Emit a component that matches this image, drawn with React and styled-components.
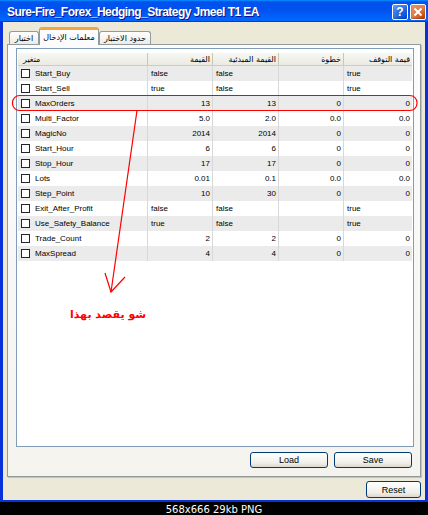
import React from "react";
import styled, { createGlobalStyle } from "styled-components";

const Global = createGlobalStyle`
  html, body { margin: 0; padding: 0; background: #000; }
  body { width: 428px; height: 515px; overflow: hidden; font-family: "Liberation Sans", "DejaVu Sans", sans-serif; }
  * { box-sizing: border-box; }
`;

const Page = styled.div`
  position: relative;
  width: 428px;
  height: 515px;
  display: flex;
  flex-direction: column;
  background: #000;
`;

const Window = styled.div`
  height: 502px;
  display: flex;
  flex-direction: column;
`;

const TitleBar = styled.div`
  height: 22px;
  flex: none;
  display: flex;
  align-items: center;
  padding: 1px 2px 0 7px;
  background: linear-gradient(180deg, #0997ff, #0053ee 8%, #0050ee 40%, #0066ff 88%, #0066ff 93%, #005bff 95%, #003dd7 96%, #003dd7);
`;

const Title = styled.span`
  flex: 1;
  color: #fff;
  font: bold 12px "Liberation Sans", sans-serif;
  letter-spacing: -0.55px;
  text-shadow: 1px 1px #0f1089;
  white-space: nowrap;
`;

const CaptionButtons = styled.div`
  display: flex;
  gap: 2px;
`;

const CaptionButton = styled.div`
  width: 16px;
  height: 16px;
  border: 1px solid #fff;
  border-radius: 2px;
  display: flex;
  align-items: center;
  justify-content: center;
  color: #fff;
  font: bold 12px "Liberation Sans", sans-serif;
  background: ${(p) =>
    p.$close
      ? "radial-gradient(circle at 85% 85%, #cc4600 0%, #dc6527 30%, #e38353 60%, #e69474 100%)"
      : "radial-gradient(circle at 85% 85%, #0054e9 0%, #2263d5 40%, #4480f0 70%, #7aa6f5 100%)"};
  box-shadow: inset 0 -1px 2px rgba(0,0,0,0.3);
`;

const Body = styled.div`
  flex: 1;
  display: flex;
  flex-direction: column;
  background: #ece9d8;
  border: solid #0831d9;
  border-width: 0 3px 2px 3px;
  padding: 5px 4px 2px 4px;
`;

const TabStrip = styled.div`
  height: 18px;
  margin-bottom: -1px;
  display: flex;
  align-items: flex-end;
  padding-left: 2px;
  position: relative;
  z-index: 1;
`;

const Tab = styled.div`
  width: ${(p) => p.$w}px;
  height: ${(p) => (p.$active ? 18 : 13)}px;
  margin-bottom: ${(p) => (p.$active ? 0 : 1)}px;
  display: flex;
  align-items: center;
  justify-content: center;
  font: 8px "DejaVu Sans", sans-serif;
  color: #000;
  white-space: nowrap;
  border: 1px solid #919b9c;
  border-bottom: none;
  border-radius: 3px 3px 0 0;
  background: ${(p) => (p.$active ? "#fcfcfe" : "linear-gradient(#ffffff, #ecebe6)")};
  border-top: ${(p) => (p.$active ? "3px solid #f1a640" : "1px solid #919b9c")};
  padding-bottom: ${(p) => (p.$active ? 1 : 0)}px;
`;

const Panel = styled.div`
  height: 433px;
  flex: none;
  display: flex;
  flex-direction: column;
  border: 1px solid #919b9c;
  box-shadow: 1px 1px 0 #c5c2b2;
  background: linear-gradient(#fcfcfe, #f4f3ee);
  padding: 3px 6px 8px 8px;
`;

const ListBox = styled.div`
  flex: 1;
  border: 1px solid #7f9db9;
  background: #fff;
  padding: 4px 1px 1px 1px;
  display: flex;
  flex-direction: column;
`;

const COLS = "130px 65px 66px 65px 1fr";

const HeaderRow = styled.div`
  height: 13px;
  display: grid;
  grid-template-columns: ${COLS};
  background: linear-gradient(#f7f7f3, #ebeae2);
  border-bottom: 1px solid #d0cdbf;
`;

const HeaderCell = styled.div`
  display: flex;
  align-items: center;
  justify-content: ${(p) => (p.$left ? "flex-start" : "flex-end")};
  padding: ${(p) => (p.$left ? "0 0 0 5px" : "0 2px 0 0")};
  font: 8px "DejaVu Sans", sans-serif;
  color: #000;
  white-space: nowrap;
  border-right: ${(p) => (p.$last ? "none" : "1px solid #c9c6b6")};
`;

const Row = styled.div`
  height: 15px;
  display: grid;
  grid-template-columns: ${COLS};
  background: ${(p) => (p.$shade ? "#ebebeb" : "#fff")};
`;

const Cell = styled.div`
  display: flex;
  align-items: center;
  justify-content: ${(p) => (p.$right ? "flex-end" : "flex-start")};
  padding: ${(p) => (p.$right ? "0 2px 0 0" : "0 0 0 3px")};
  font: 8px "Liberation Sans", sans-serif;
  color: #000;
  white-space: nowrap;
  overflow: hidden;
  border-right: ${(p) => (p.$last ? "none" : "1px solid #d8d8d8")};
`;

const NameCell = styled(Cell)`
  gap: 5px;
`;

const Check = styled.span`
  width: 9px;
  height: 9px;
  flex: none;
  border: 1px solid #1e2630;
  background: #fff;
`;

const ButtonRow = styled.div`
  display: flex;
  justify-content: flex-end;
  gap: 6px;
  margin-top: 5px;
  padding-right: 2px;
`;

const Button = styled.div`
  width: ${(p) => p.$w}px;
  height: ${(p) => p.$h}px;
  display: flex;
  align-items: center;
  justify-content: center;
  border: 1px solid #003c74;
  border-radius: 3px;
  background: linear-gradient(#ffffff, #f0efea 70%, #dcd8cc);
  font: 9px "Liberation Sans", sans-serif;
  color: #000;
`;

const Footer = styled.div`
  display: flex;
  justify-content: flex-end;
  margin-top: 4px;
`;

const Caption = styled.div`
  flex: 1;
  display: flex;
  align-items: center;
  justify-content: center;
  color: #fff;
  font: 10px "DejaVu Sans", sans-serif;
  padding-top: 1px;
`;

const Overlay = styled.svg`
  position: absolute;
  left: 0;
  top: 0;
  pointer-events: none;
`;

const Note = styled.div`
  position: absolute;
  left: 70px;
  top: 308px;
  color: #ff0000;
  font: bold 11px "DejaVu Sans", sans-serif;
  white-space: nowrap;
`;

const rows = [
  ["Start_Buy", "false", "false", "", "true", true],
  ["Start_Sell", "true", "false", "", "true", true],
  ["MaxOrders", "13", "13", "0", "0"],
  ["Multi_Factor", "5.0", "2.0", "0.0", "0.0"],
  ["MagicNo", "2014", "2014", "0", "0"],
  ["Start_Hour", "6", "6", "0", "0"],
  ["Stop_Hour", "17", "17", "0", "0"],
  ["Lots", "0.01", "0.1", "0.0", "0.0"],
  ["Step_Point", "10", "30", "0", "0"],
  ["Exit_After_Profit", "false", "false", "", "true", true],
  ["Use_Safety_Balance", "true", "false", "", "true", true],
  ["Trade_Count", "2", "2", "0", "0"],
  ["MaxSpread", "4", "4", "0", "0"],
];

export default function App() {
  return (
    <Page>
      <Global />
      <Window>
        <TitleBar>
          <Title>Sure-Fire_Forex_Hedging_Strategy Jmeel T1 EA</Title>
          <CaptionButtons>
            <CaptionButton>?</CaptionButton>
            <CaptionButton $close>
              <svg width="10" height="10" viewBox="0 0 10 10">
                <path d="M1.5 1.5 L8.5 8.5 M8.5 1.5 L1.5 8.5" stroke="#fff" strokeWidth="2" />
              </svg>
            </CaptionButton>
          </CaptionButtons>
        </TitleBar>
        <Body>
          <TabStrip>
            <Tab $w={30}>اختبار</Tab>
            <Tab $w={60} $active>معلمات الإدخال</Tab>
            <Tab $w={52}>حدود الاختبار</Tab>
          </TabStrip>
          <Panel>
            <ListBox>
              <HeaderRow>
                <HeaderCell $left>متغير</HeaderCell>
                <HeaderCell>القيمة</HeaderCell>
                <HeaderCell>القيمة المبدئية</HeaderCell>
                <HeaderCell>خطوة</HeaderCell>
                <HeaderCell $last>قيمة التوقف</HeaderCell>
              </HeaderRow>
              {rows.map(([name, v, init, step, stop, bool], i) => (
                <Row key={name} $shade={i % 2 === 0}>
                  <NameCell>
                    <Check />
                    {name}
                  </NameCell>
                  <Cell $right={!bool}>{v}</Cell>
                  <Cell $right={!bool}>{init}</Cell>
                  <Cell $right={!bool}>{step}</Cell>
                  <Cell $right={!bool} $last>{stop}</Cell>
                </Row>
              ))}
            </ListBox>
            <ButtonRow>
              <Button $w={78} $h={16}>Load</Button>
              <Button $w={78} $h={16}>Save</Button>
            </ButtonRow>
          </Panel>
          <Footer>
            <Button $w={55} $h={17}>Reset</Button>
          </Footer>
        </Body>
      </Window>
      <Caption>568x666 29kb PNG</Caption>
      <Overlay width="428" height="515" viewBox="0 0 428 515">
        <rect x="12.5" y="95.5" width="404.5" height="15" rx="7" ry="7" fill="none" stroke="#ff0000" strokeWidth="1.2" />
        <path d="M137 110.5 L111 292" stroke="#ff0000" strokeWidth="1.2" fill="none" />
        <path d="M105 273 L111 292 L125 277" stroke="#ff0000" strokeWidth="1.2" fill="none" />
      </Overlay>
      <Note>شو يقصد بهذا</Note>
    </Page>
  );
}
